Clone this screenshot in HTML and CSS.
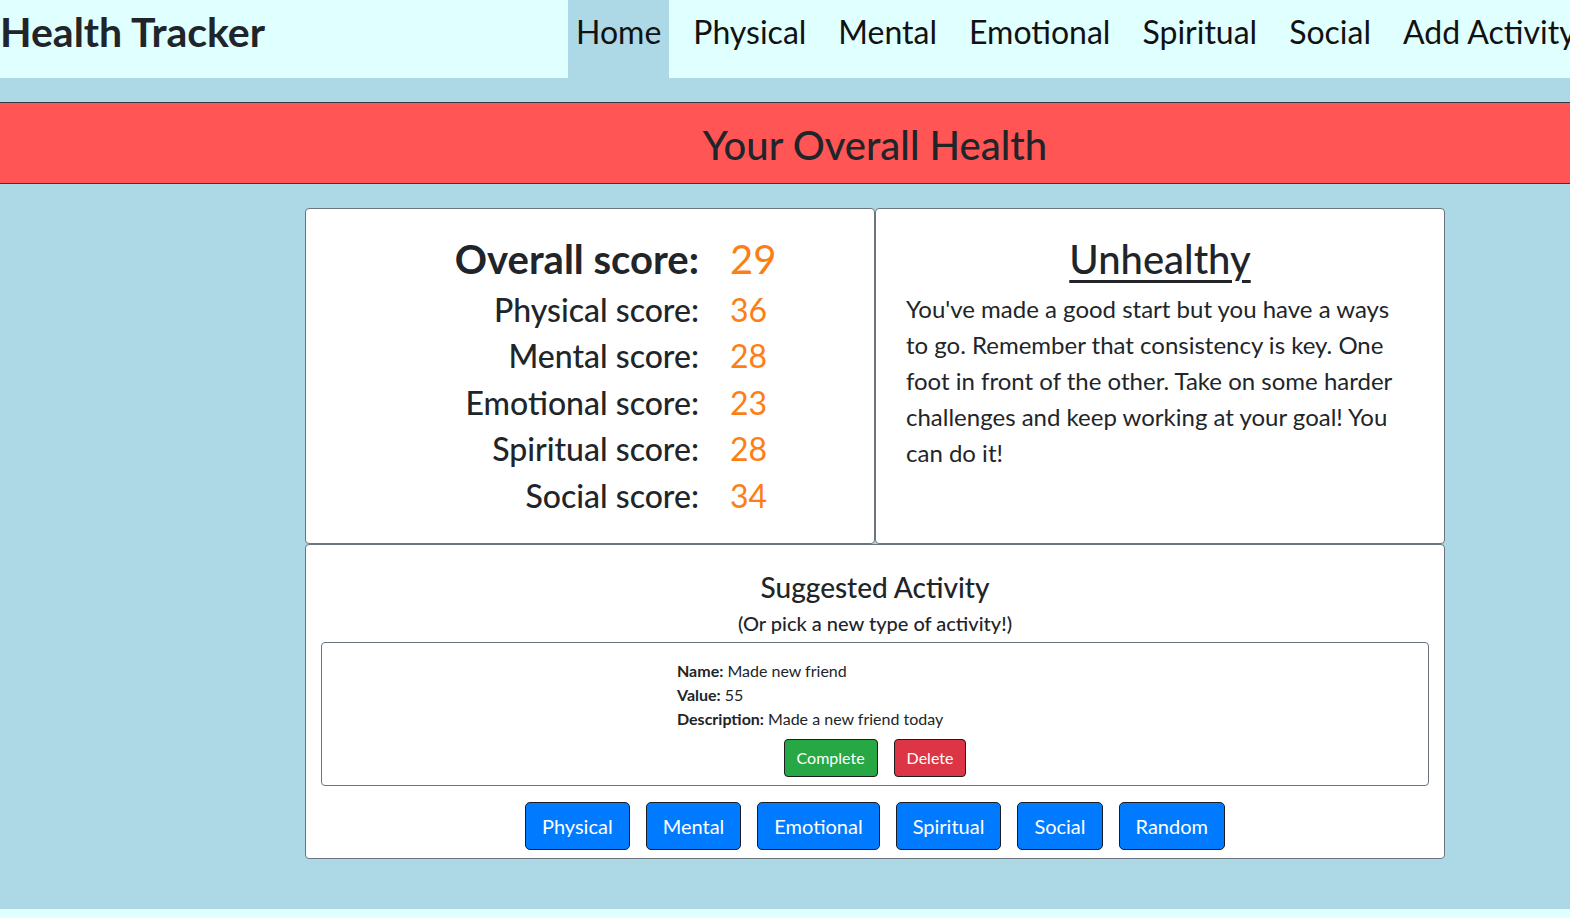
FILE: index.html
```html
<!DOCTYPE html>
<html lang="en">
<head>
<meta charset="utf-8">
<title>Health Tracker</title>
<link rel="stylesheet" href="styles.css">
</head>
<body>
<header class="navbar">
  <a class="brand" href="#">Health Tracker</a>
  <ul class="nav">
    <li class="nav-item active"><a class="nav-link" href="#">Home</a></li>
    <li class="nav-item"><a class="nav-link" href="#">Physical</a></li>
    <li class="nav-item"><a class="nav-link" href="#">Mental</a></li>
    <li class="nav-item"><a class="nav-link" href="#">Emotional</a></li>
    <li class="nav-item"><a class="nav-link" href="#">Spiritual</a></li>
    <li class="nav-item"><a class="nav-link" href="#">Social</a></li>
    <li class="nav-item"><a class="nav-link" href="#">Add Activity</a></li>
  </ul>
</header>

<section class="banner">
  <div class="content">
    <h1 class="banner-title">Your Overall Health</h1>
  </div>
</section>

<main class="content dashboard">
  <div class="score-row">
    <div class="card scores">
      <div class="score-grid">
        <div class="score-label overall">Overall score:</div><div class="score-value overall">29</div>
        <div class="score-label">Physical score:</div><div class="score-value">36</div>
        <div class="score-label">Mental score:</div><div class="score-value">28</div>
        <div class="score-label">Emotional score:</div><div class="score-value">23</div>
        <div class="score-label">Spiritual score:</div><div class="score-value">28</div>
        <div class="score-label">Social score:</div><div class="score-value">34</div>
      </div>
    </div>
    <div class="card status">
      <h1 class="status-title">Unhealthy</h1>
      <p class="status-text">You've made a good start but you have a ways to go. Remember that consistency is key. One foot in front of the other. Take on some harder challenges and keep working at your goal! You can do it!</p>
    </div>
  </div>

  <div class="card suggest">
    <h3 class="suggest-title">Suggested Activity</h3>
    <h5 class="suggest-sub">(Or pick a new type of activity!)</h5>
    <div class="activity">
      <div class="details">
        <div><b>Name:</b> Made new friend</div>
        <div><b>Value:</b> 55</div>
        <div><b>Description:</b> Made a new friend today</div>
      </div>
      <div class="actions">
        <button class="btn btn-success">Complete</button>
        <button class="btn btn-danger">Delete</button>
      </div>
    </div>
    <div class="types">
      <button class="btn btn-lg btn-primary">Physical</button>
      <button class="btn btn-lg btn-primary">Mental</button>
      <button class="btn btn-lg btn-primary">Emotional</button>
      <button class="btn btn-lg btn-primary">Spiritual</button>
      <button class="btn btn-lg btn-primary">Social</button>
      <button class="btn btn-lg btn-primary">Random</button>
    </div>
  </div>
</main>

<footer class="footer"></footer>
</body>
</html>
```

FILE: styles.css
```css
html, body {
  margin: 0;
  padding: 0;
}

body {
  background: #add8e6;
  color: #212529;
  font-family: Lato, "Open Sans", "DejaVu Sans", sans-serif;
  overflow-x: hidden;
}

a {
  color: inherit;
  text-decoration: none;
}

/* ---------- navbar ---------- */
.navbar {
  display: flex;
  align-items: flex-start;
  height: 78px;
  background: #e0ffff;
  white-space: nowrap;
}

.brand {
  flex: 0 0 568px;
  font-size: 41px;
  font-weight: 700;
  line-height: 64px;
  color: #212529;
}

.nav {
  display: flex;
  gap: 16px;
  margin: 0;
  padding: 0;
  list-style: none;
}

.nav-link {
  display: block;
  height: 78px;
  padding: 0 8px;
  font-size: 32px;
  line-height: 64px;
  color: #111;
}

.nav-item.active .nav-link {
  background: #add8e6;
}

/* ---------- banner ---------- */
.content {
  margin-left: 305px;
  margin-right: 125px;
}

.banner {
  margin-top: 24px;
  background: #ff5555;
  border-top: 1px solid #343a40;
  border-bottom: 1px solid #343a40;
}

.banner-title {
  margin: 0;
  padding: 18px 0 14px;
  text-align: center;
  font-size: 40px;
  font-weight: 500;
  line-height: 48px;
}

/* ---------- cards ---------- */
.dashboard {
  margin-top: 24px;
}

.card {
  background: #fff;
  border: 1px solid #6c757d;
  border-radius: 4px;
}

.score-row {
  display: grid;
  grid-template-columns: 1fr 1fr;
}

.scores {
  padding: 26px 0 20px;
}

.score-grid {
  display: grid;
  grid-template-columns: 393px 1fr;
  column-gap: 31px;
}

.score-label,
.score-value {
  font-size: 32px;
  line-height: 1.2;
  margin-bottom: 8px;
  font-weight: 500;
}

.score-label {
  text-align: right;
}

.score-value {
  color: #fd7e14;
  font-weight: 400;
}

.score-label.overall {
  font-size: 40px;
  font-weight: 700;
}

.score-value.overall {
  font-size: 40px;
}

.status {
  padding: 26px 30px 18px;
}

.status-title {
  margin: 0 0 8px;
  text-align: center;
  font-size: 40px;
  font-weight: 500;
  line-height: 1.2;
  text-decoration: underline;
  text-decoration-thickness: 3px;
  text-underline-offset: 6px;
}

.status-text {
  margin: 0;
  font-size: 24px;
  line-height: 36px;
}

/* ---------- suggested ---------- */
.suggest {
  padding: 26px 15px 8px;
  text-align: center;
}

.suggest-title {
  margin: 0 0 6px;
  font-size: 28px;
  font-weight: 500;
  line-height: 1.2;
}

.suggest-sub {
  margin: 0 0 7px;
  font-size: 20px;
  font-weight: 500;
  line-height: 24px;
}

.activity {
  border: 1px solid #6c757d;
  border-radius: 4px;
  padding: 16px 0 8px;
}

.details {
  margin-left: 355px;
  text-align: left;
  font-size: 16px;
  line-height: 24px;
}

.actions {
  display: flex;
  justify-content: center;
  gap: 16px;
  margin-top: 8px;
}

.btn {
  font-family: inherit;
  font-size: 16px;
  line-height: 24px;
  padding: 6px 12px;
  border: 1px solid #1b1e21;
  border-radius: 4px;
  color: #fff;
  cursor: pointer;
}

.btn-success { background: #28a745; }
.btn-danger { background: #dc3545; }
.btn-primary { background: #007bff; }

.btn-lg {
  font-size: 20px;
  line-height: 30px;
  padding: 8px 16px;
  border-radius: 5px;
}

.types {
  display: flex;
  justify-content: center;
  gap: 16px;
  margin-top: 16px;
}

/* ---------- footer ---------- */
.footer {
  margin-top: 50px;
  height: 10px;
  background: #e0ffff;
}
```
